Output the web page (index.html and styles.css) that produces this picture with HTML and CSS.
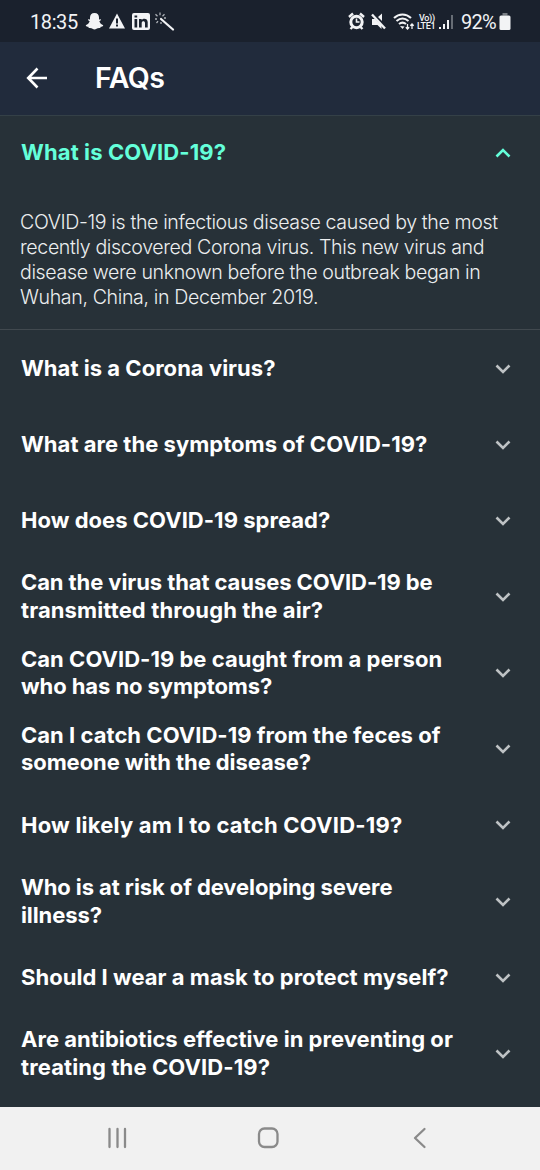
FILE: index.html
```html
<!DOCTYPE html>
<html lang="en">
<head>
<meta charset="utf-8">
<title>FAQs</title>
<link rel="stylesheet" href="styles.css">
</head>
<body>
<div class="screen">
  <div class="status">
    <span class="time">18:35</span>
    <svg class="status-left" width="92" height="22" viewBox="0 0 92 22" fill="#f2f3f5">
      <path d="M9.500 2C6.500 2 5 4 5 6.500v2l-1.800-.2c-.6.700.2 1.400 1.500 1.900-.7 2-2 3.300-4 4 .3 1.200 1.500 1.400 2.600 1.600l.5 1.200c1.800-.2 3 .1 3.700.7 1.300 1 2.700 1 4 0 .8-.6 2-.9 3.700-.7l.5-1.200c1.100-.2 2.300-.4 2.600-1.600-2-.7-3.300-2-4-4 1.300-.5 2.100-1.200 1.500-1.900l-1.800.2v-2C14 4 12.500 2 9.500 2z"/>
      <path fill-rule="evenodd" d="M32 2.500 24 17.500h16zM31 7.500h2v5h-2zm0 6h2v2h-2z"/>
      <path fill-rule="evenodd" d="M49 2h14q2 0 2 2v13q0 2-2 2H49q-2 0-2-2V4q0-2 2-2zM49.500 8v8.500h2.700V8zm0-3.500v2h2.700v-2zM54 8v8.500h2.700v-4.600c0-2.200 3.300-2.200 3.300 0v4.600h2.700v-5.300c0-4-4.400-4.400-6-2.200v-1z"/>
      <path d="m76 8 12 10.500" stroke="#f2f3f5" stroke-width="2.200" stroke-linecap="round"/>
      <path d="M75 1.500v2.800M70.500 3.200l2 2M79.500 3.200l-2 2M70 8h2M71.500 12l1.500-1.800M76 11v2M79 7h2" fill="none" stroke="#aeb2b8" stroke-width="1.300"/>
    </svg>
    <span class="grow"></span>
    <svg class="status-mid" width="68" height="22" viewBox="0 0 68 22" fill="none" stroke="#f2f3f5">
      <circle cx="9.500" cy="11" r="5.700" stroke-width="3"/><path d="M9.500 7.500V11h3" stroke-width="1.600"/><path d="m2 6 4-3.500M17 6l-4-3.500M5.500 16l-2 2M13.500 16l2 2" stroke-width="2.400"/>
      <path d="M25 8h3l1.500 1.500 5 5v3.500L30.500 14H25zM31 6l4-3.500V10z" fill="#f2f3f5" stroke="none"/><path d="m25 3.500 13 14" stroke-width="2.400"/>
      <path d="M47 7c5-4.700 12-4.700 17 0M49.500 10c4-3.300 8-3.300 12 0M52 13c2.500-2 4.500-2 7 0" stroke-width="2.100"/><path d="m53 15 2.500 3 2-2.500z" fill="#f2f3f5" stroke="none"/><path d="M60.500 13v5m-1.700-1.700 1.700 1.700 1.700-1.700M65 18v-5m-1.700 1.700L65 13l1.700 1.700" stroke-width="1.300"/>
    </svg>
    <span class="lte"><span class="volte">Vo))</span><span>LTE1</span></span>
    <svg class="signal" width="15" height="18" viewBox="0 0 15 18" fill="#f2f3f5"><path d="M0 14h2v2H0zM4 11h2v5H4zM8 7h2v9H8z"/><path fill="#676d75" d="M12 2h2v14h-2z"/></svg>
    <span class="percent">92%</span>
    <svg class="battery" width="12" height="18" viewBox="0 0 12 18" fill="#f2f3f5"><path fill="#777c83" d="M3.500 0h5v2.500h-5z"/><path d="M2 2.500h8q1.500 0 1.500 1.500v11.500Q11.500 17 10 17H2Q.5 17 .5 15.500V4Q.5 2.500 2 2.500z"/></svg>
  </div>
  <header class="header">
    <svg class="back" width="22" height="22" viewBox="0 0 22 22" fill="none" stroke="#fff" stroke-width="2.600"><path d="M21 11H2M11.500 1.500 2.200 11l9.300 9.500"/></svg>
    <h1 class="title">FAQs</h1>
  </header>
  <main class="faq">
    <div class="row row-open"><div class="question"><span class="loose">What is COVID-19?</span></div><svg class="chevron" viewBox="0 0 16 10"><path d="m1.500 8.500 6.500-6.500 6.500 6.500"/></svg></div>
    <p class="answer">COVID-19 is the infectious disease caused by the most<br>recently discovered Corona virus. This new virus and<br>disease were unknown before the outbreak began in<br>Wuhan, China, in December 2019.</p>
    <div class="row"><div class="question">What is a Corona virus?</div><svg class="chevron" viewBox="0 0 16 10"><path d="m1.500 1.500 6.500 6.500 6.500-6.500"/></svg></div>
    <div class="row"><div class="question">What are the symptoms of COVID-19?</div><svg class="chevron" viewBox="0 0 16 10"><path d="m1.500 1.500 6.500 6.500 6.500-6.500"/></svg></div>
    <div class="row"><div class="question">How does COVID-19 spread?</div><svg class="chevron" viewBox="0 0 16 10"><path d="m1.500 1.500 6.500 6.500 6.500-6.500"/></svg></div>
    <div class="row"><div class="question"><span class="tight">Can the virus that causes COVID-19 be</span><br><span class="loose">transmitted through the air?</span></div><svg class="chevron" viewBox="0 0 16 10"><path d="m1.500 1.500 6.500 6.500 6.500-6.500"/></svg></div>
    <div class="row"><div class="question">Can COVID-19 be caught from a person<br><span class="tight">who has no symptoms?</span></div><svg class="chevron" viewBox="0 0 16 10"><path d="m1.500 1.500 6.500 6.500 6.500-6.500"/></svg></div>
    <div class="row"><div class="question">Can I catch COVID-19 from the feces of<br><span class="tight">someone with the disease?</span></div><svg class="chevron" viewBox="0 0 16 10"><path d="m1.500 1.500 6.500 6.500 6.500-6.500"/></svg></div>
    <div class="row"><div class="question"><span class="looser">How likely am I to catch COVID-19?</span></div><svg class="chevron" viewBox="0 0 16 10"><path d="m1.500 1.500 6.500 6.500 6.500-6.500"/></svg></div>
    <div class="row"><div class="question"><span class="tight">Who is at risk of developing severe<br>illness?</span></div><svg class="chevron" viewBox="0 0 16 10"><path d="m1.500 1.500 6.500 6.500 6.500-6.500"/></svg></div>
    <div class="row"><div class="question">Should I wear a mask to protect myself?</div><svg class="chevron" viewBox="0 0 16 10"><path d="m1.500 1.500 6.500 6.500 6.500-6.500"/></svg></div>
    <div class="row"><div class="question">Are antibiotics effective in preventing or<br><span class="loose">treating the COVID-19?</span></div><svg class="chevron" viewBox="0 0 16 10"><path d="m1.500 1.500 6.500 6.500 6.500-6.500"/></svg></div>
  </main>
  <nav class="navbar">
    <svg width="22" height="24" viewBox="0 0 22 24"><path d="M2.500 3v18M10.500 3v18M18 3v18"/></svg>
    <svg class="home" width="24" height="24" viewBox="0 0 24 24"><rect x="2" y="2.500" width="18.500" height="18.500" rx="5.500"/></svg>
    <svg width="16" height="24" viewBox="0 0 16 24"><path d="M12.500 3 3 12l9.500 9"/></svg>
  </nav>
</div>
</body>
</html>
```
FILE: styles.css
```css
body { margin: 0; }
.screen { width: 540px; height: 1170px; display: flex; flex-direction: column; overflow: hidden; background: #273138; color: #fff; font-family: Inter, sans-serif; }
.status { flex: none; height: 42px; box-sizing: border-box; padding: 2px 29px 0 30px; display: flex; align-items: center; background: #1a212d; color: #f2f3f5; font-family: Roboto, sans-serif; font-size: 20px; white-space: nowrap; }
.time { width: 55px; letter-spacing: -.4px; }
.status-left { overflow: visible; }
.grow { flex: 1; }
.status-mid { flex: none; margin-right: 2px; }
.lte { width: 22px; display: flex; flex-direction: column; font-size: 9px; line-height: 8px; font-weight: 500; letter-spacing: -.3px; }
.volte { padding-left: 2px; }
.signal { margin-right: 7px; }
.percent { width: 38px; letter-spacing: -.7px; }
.header { flex: none; height: 74px; box-sizing: border-box; padding: 0 26px 2px; display: flex; align-items: center; background: #212b3c; border-bottom: 1px solid #344047; }
.title { margin: 0 0 0 47px; font-size: 28.500px; font-weight: 600; letter-spacing: -.5px; }
.faq { flex: 1; min-height: 0; }
.row { height: 76.15px; box-sizing: border-box; padding: 1px 29px 0 21px; display: flex; align-items: center; justify-content: space-between; }
.row-open { height: 73px; color: #64ffda; }
.question { font-size: 22px; line-height: 27.500px; font-weight: 700; letter-spacing: .03px; white-space: nowrap; }
.looser { letter-spacing: .21px; }
.loose { letter-spacing: .11px; }
.tight { letter-spacing: -.09px; }
.chevron { width: 16px; height: 10px; flex: none; fill: none; stroke: #bec2c4; stroke-width: 2.600; }
.row-open .chevron { stroke: #64ffda; }
.answer { margin: 0; padding: 21px 20px 19px; border-bottom: 1px solid #41494f; font-size: 19.600px; line-height: 25px; font-weight: 300; letter-spacing: -.38px; color: #eceeef; white-space: nowrap; }
.navbar { flex: none; height: 63px; box-sizing: border-box; padding: 0 112px 1px 107px; display: flex; align-items: center; justify-content: space-between; background: #f1f1f1; }
.navbar svg { fill: none; stroke: #8a8a8a; stroke-width: 2.300; stroke-linecap: round; stroke-linejoin: round; }
.navbar .home { margin-right: 3px; }
```
